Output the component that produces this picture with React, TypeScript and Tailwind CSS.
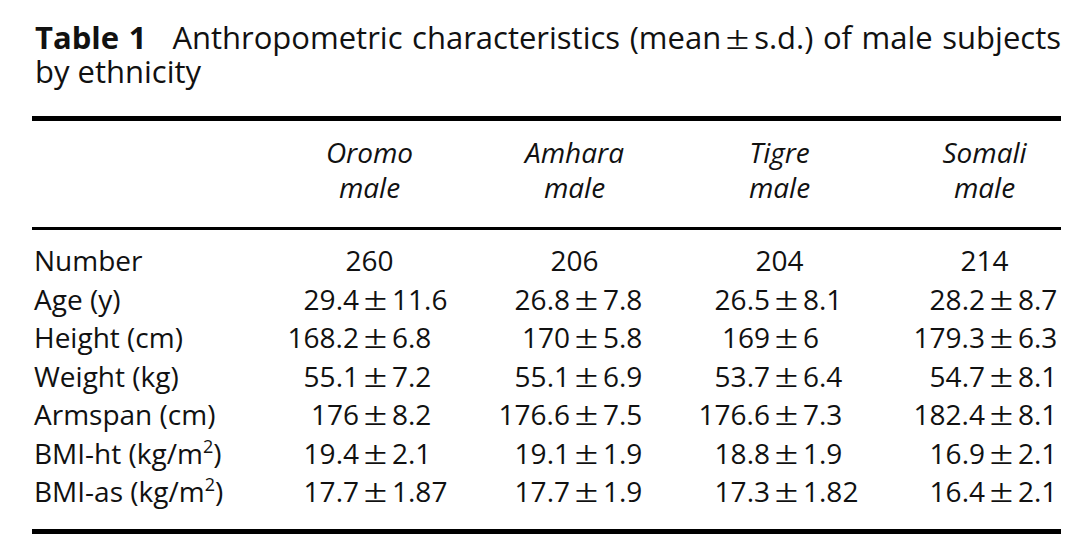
import React from "react";

const font = { fontFamily: '"Open Sans", "Noto Sans", sans-serif' };

type Val = [string, string];

function PM() {
  return (
    <span className="inline-block w-[33px] text-center leading-none">
      <span
        className="inline-block scale-x-[1.25] text-[34px] leading-none"
        style={{ fontFamily: '"Liberation Serif", serif' }}
      >
        ±
      </span>
    </span>
  );
}

const Sq = () => <sup className="text-[18px] relative -top-[11px]">2</sup>;

const rows: { label: React.ReactNode; vals: Val[] }[] = [
  { label: "Age (y)", vals: [["29.4", "11.6"], ["26.8", "7.8"], ["26.5", "8.1"], ["28.2", "8.7"]] },
  { label: "Height (cm)", vals: [["168.2", "6.8"], ["170", "5.8"], ["169", "6"], ["179.3", "6.3"]] },
  { label: "Weight (kg)", vals: [["55.1", "7.2"], ["55.1", "6.9"], ["53.7", "6.4"], ["54.7", "8.1"]] },
  { label: "Armspan (cm)", vals: [["176", "8.2"], ["176.6", "7.5"], ["176.6", "7.3"], ["182.4", "8.1"]] },
  {
    label: (
      <>
        BMI-ht (kg/m<Sq />)
      </>
    ),
    vals: [["19.4", "2.1"], ["19.1", "1.9"], ["18.8", "1.9"], ["16.9", "2.1"]],
  },
  {
    label: (
      <>
        BMI-as (kg/m<Sq />)
      </>
    ),
    vals: [["17.7", "1.87"], ["17.7", "1.9"], ["17.3", "1.82"], ["16.4", "2.1"]],
  },
];

const leftW = ["w-[92px]", "w-[98px]", "w-[93px]", "w-[103px]"];
const heads = ["Oromo", "Amhara", "Tigre", "Somali"];
const grid = "grid grid-cols-[235px_205px_205px_205px_205px] w-[1055px]";

export default function App() {
  return (
    <div className="w-[1074px] h-[549px] bg-white text-[#111] overflow-hidden" style={font}>
      <div className="ml-[32px] pt-[21px]">
        <div className="w-[1029px] text-[31px] leading-[33px] pl-[3px]">
          <p className="text-justify">
            <span className="font-bold">Table 1</span>
            <span className="inline-block w-[26px]"></span>Anthropometric characteristics (mean
            <PM />
            s.d.) of male subjects by ethnicity
          </p>
        </div>
        <div className="mt-[28px] w-[1029px] h-[5px] bg-black"></div>
        <div className={`${grid} text-[28px] leading-[35px] italic pt-[14px] pb-[22px]`}>
          <div></div>
          {heads.map((h) => (
            <div key={h} className="text-center">
              {h}
              <br />
              male
            </div>
          ))}
        </div>
        <div className="w-[1029px] h-[3px] bg-black"></div>
        <div className="pt-[11px] pb-[18px] text-[28px] leading-[38.5px]">
          <div className={grid}>
            <div className="pl-[2px]">Number</div>
            {["260", "206", "204", "214"].map((n) => (
              <div key={n} className="text-center">
                {n}
              </div>
            ))}
          </div>
          {rows.map((r, i) => (
            <div key={i} className={grid}>
              <div className="pl-[2px] whitespace-nowrap">{r.label}</div>
              {r.vals.map((v, j) => (
                <div key={j} className="flex items-baseline whitespace-nowrap">
                  <span className={`${leftW[j]} shrink-0 text-right`}>{v[0]}</span>
                  <PM />
                  <span>{v[1]}</span>
                </div>
              ))}
            </div>
          ))}
        </div>
        <div className="w-[1029px] h-[5px] bg-black"></div>
      </div>
    </div>
  );
}
